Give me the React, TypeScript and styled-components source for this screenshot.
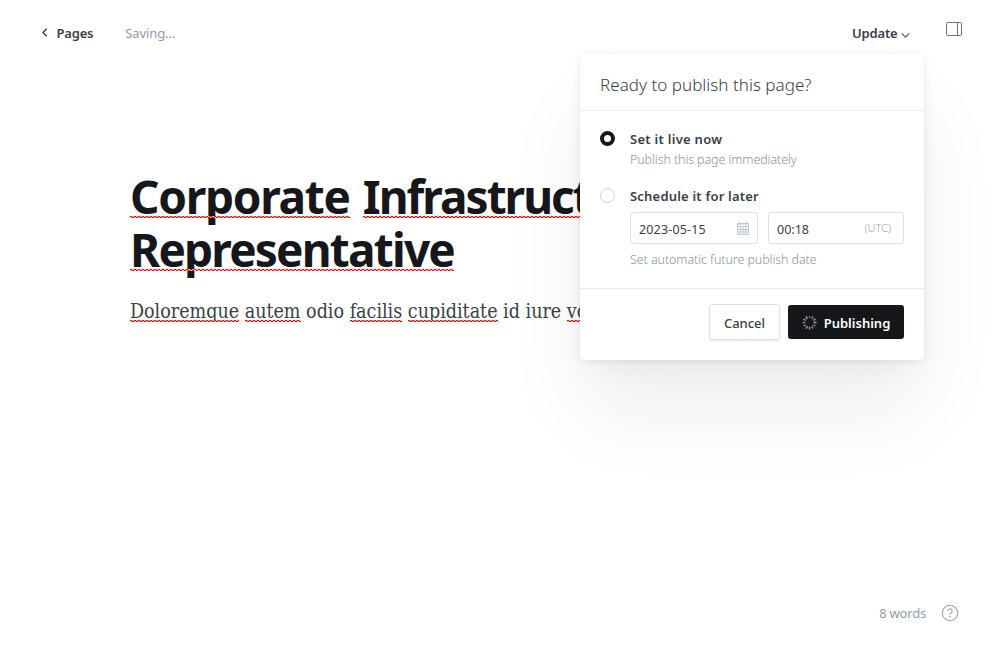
import React from 'react';
import styled, { createGlobalStyle } from 'styled-components';

const sans = `"Noto Sans", "Liberation Sans", sans-serif`;

const Global = createGlobalStyle`
  *, *::before, *::after { box-sizing: border-box; }
  body { margin: 0; background: #fff; font-family: ${sans}; color: #394047; overflow: hidden; }
  h1, h2, p { margin: 0; font-weight: 400; }
  button { font-family: inherit; }
  svg { display: block; flex: none; }
`;

const Page = styled.div`
  position: relative;
  display: flex;
  flex-direction: column;
  width: 1000px;
  height: 660px;
  overflow: hidden;
`;

const Label = styled.span<{ $size?: number; $weight?: number; $color?: string; $track?: number }>`
  font-size: ${p => p.$size ?? 13}px;
  font-weight: ${p => p.$weight ?? 400};
  color: ${p => p.$color ?? '#394047'};
  letter-spacing: ${p => p.$track ?? 0}px;
  line-height: 20px;
  white-space: nowrap;
`;

const TopBar = styled.header`
  display: flex;
  justify-content: space-between;
  height: 68px;
  padding: 20px 38px 0 41px;
`;

const BarGroup = styled.div`
  display: flex;
  align-items: flex-start;
`;

const BackLink = styled.a`
  display: flex;
  gap: 7.5px;
  margin-right: 32px;
  padding-top: 3px;
`;

const Status = styled.div`
  display: flex;
  padding-top: 3px;
`;

const UpdateButton = styled.button`
  display: flex;
  gap: 3.5px;
  margin: 3px 36px 0 0;
  padding: 0;
  border: 0;
  background: none;
`;

const Editor = styled.main`
  flex: 1;
  padding: 102px 0 0 130px;
`;

const Title = styled.h1`
  width: 740px;
  color: #15171a;
  font-size: 46px;
  font-weight: 700;
  line-height: 53px;
  letter-spacing: -1.8px;
  word-spacing: 3px;
  white-space: nowrap;
`;

const Body = styled.p`
  margin-top: 20px;
  color: #394047;
  font-family: "DejaVu Serif Condensed", "DejaVu Serif", serif;
  font-stretch: condensed;
  font-size: 19.5px;
  line-height: 32px;
  white-space: nowrap;
`;

const Misspelled = styled.span<{ $drop: number; $track?: number }>`
  position: relative;
  letter-spacing: ${p => (p.$track === undefined ? 'inherit' : `${p.$track}px`)};
  &::after {
    content: '';
    position: absolute;
    left: 0;
    right: 0;
    bottom: ${p => p.$drop}px;
    height: 2px;
    background:
      linear-gradient(90deg, #f00 50%, #ffb3b3 50%) 0 0 / 4px 1px repeat-x,
      linear-gradient(90deg, #ffb3b3 50%, #f00 50%) 0 1px / 4px 1px repeat-x;
  }
`;

const StatusBar = styled.footer`
  display: flex;
  justify-content: flex-end;
  align-items: center;
  gap: 15px;
  height: 36px;
  margin-bottom: 29px;
  padding-right: 41px;
`;

const Dialog = styled.section`
  position: absolute;
  top: 54px;
  left: 580px;
  width: 344px;
  height: 306px;
  background: #fff;
  border-radius: 5px;
  box-shadow:
    0 0 7px rgba(0, 0, 0, 0.08),
    0 2px 3px -1px rgba(0, 0, 0, 0.02),
    0 12px 24px -6px rgba(0, 0, 0, 0.05),
    0 54px 85px -4px rgba(0, 0, 0, 0.07);
`;

const DialogHeader = styled.div`
  display: flex;
  height: 57px;
  padding: 21px 20px 0;
  border-bottom: 1px solid #e9ebec;
`;

const Options = styled.div`
  display: flex;
  flex-direction: column;
  gap: 16px;
  height: 178px;
  padding: 18px 20px 0;
  border-bottom: 1px solid #e9ebec;
`;

const Option = styled.div`
  display: flex;
  gap: 15px;
`;

const OptionText = styled.div`
  display: flex;
  flex-direction: column;
  flex: 1;
`;

const Hint = styled(Label)`
  margin-top: 1px;
`;

const Radio = styled.span<{ $on?: boolean }>`
  width: 15px;
  height: 15px;
  margin-top: 2px;
  border: ${p => (p.$on ? '4px solid #15171a' : '1px solid #c8d1d9')};
  border-radius: 50%;
`;

const Fields = styled.div`
  display: flex;
  gap: 10px;
  margin: 6px 0 5px;
`;

const Field = styled.div<{ $width: number; $end: number }>`
  display: flex;
  align-items: center;
  justify-content: space-between;
  width: ${p => p.$width}px;
  height: 32px;
  padding: 0 ${p => p.$end}px 0 8px;
  border: 1px solid #dddfe2;
  border-radius: 3px;
`;

const FieldValue = styled(Label)`
  padding-top: 4px;
`;

const Actions = styled.div`
  display: flex;
  justify-content: flex-end;
  align-items: center;
  gap: 8px;
  height: 66px;
  padding-right: 20px;
`;

const Button = styled.button<{ $primary?: boolean }>`
  display: flex;
  align-items: center;
  justify-content: center;
  gap: 7px;
  width: ${p => (p.$primary ? 116 : 71)}px;
  height: ${p => (p.$primary ? 34 : 36)}px;
  padding: ${p => (p.$primary ? 2 : 1)}px 0 0;
  border: ${p => (p.$primary ? '0' : '1px solid #dfe1e3')};
  border-radius: 3px;
  background: ${p => (p.$primary ? '#15171a' : '#fff')};
  box-shadow: ${p => (p.$primary ? 'none' : '0 1px 2px rgba(0, 0, 0, 0.09)')};
`;

const ChevronLeft = () => (
  <svg width="8" height="20" viewBox="0 0 8 20" fill="none" stroke="#394047" strokeWidth="1.4">
    <path d="M5.7 5.7 1.9 9.5l3.8 3.8" />
  </svg>
);

const ChevronDown = () => (
  <svg width="9" height="20" viewBox="0 0 9 20" fill="none" stroke="#5d656c" strokeWidth="1.3">
    <path d="M.7 10.4 4.5 14.1 8.3 10.4" />
  </svg>
);

const SidebarIcon = () => (
  <svg width="16" height="20" viewBox="0 0 16 20" fill="none" stroke="#6a7178">
    <rect x=".5" y="2.5" width="15" height="13" rx="1.2" />
    <path d="M11.5 2.5v13" />
  </svg>
);

const HelpIcon = () => (
  <svg width="18" height="18" viewBox="0 0 18 18" fill="none" stroke="#98a5b3" strokeWidth="1.1">
    <circle cx="9" cy="9" r="7.7" />
    <path d="M6.8 7.1a2.2 2.2 0 1 1 3.3 1.9C9.3 9.5 9 9.8 9 10.7" />
    <circle cx="9" cy="12.7" r=".35" fill="#98a5b3" />
  </svg>
);

const CalendarIcon = () => (
  <svg width="12" height="14" viewBox="0 0 12 14" fill="none" stroke="#bcc5cd" strokeWidth=".9">
    <path d="M.5 2.5h11v11H.5zM.5 5.5h11M.5 8.5h11M.5 11h11M3.3 5.3v8.2M6 5.3v8.2M8.7 5.3v8.2M2.5.3v3.4M9.5.3v3.4" />
    <path d="M.5 3.5h11" strokeWidth="2" opacity=".45" />
  </svg>
);

const Spinner = () => (
  <svg width="15" height="15" viewBox="-7.5 -6.5 15 15" stroke="#a5a8ab" strokeWidth="1.6">
    {Array.from({ length: 12 }, (_, i) => (
      <path key={i} d="M0-4.2V-7" transform={`rotate(${i * 30})`} opacity={0.6 + (i % 4) * 0.12} />
    ))}
  </svg>
);

export default function App() {
  return (
    <Page>
      <Global />
      <TopBar>
        <BarGroup>
          <BackLink>
            <ChevronLeft />
            <Label $weight={600} $track={-0.2}>Pages</Label>
          </BackLink>
          <Status><Label $color="#8e9cab" $track={-0.1}>Saving...</Label></Status>
        </BarGroup>
        <BarGroup>
          <UpdateButton>
            <Label $weight={600} $track={-0.15}>Update</Label>
            <ChevronDown />
          </UpdateButton>
          <SidebarIcon />
        </BarGroup>
      </TopBar>
      <Editor>
        <Title>
          <Misspelled $drop={9} $track={-1.3}>Corporate</Misspelled>{' '}
          <Misspelled $drop={9} $track={-2}>Infrastructure</Misspelled>
          <br />
          <Misspelled $drop={9}>Representative</Misspelled>
        </Title>
        <Body>
          <Misspelled $drop={1}>Doloremque</Misspelled> <Misspelled $drop={1}>autem</Misspelled> odio{' '}
          <Misspelled $drop={1}>facilis</Misspelled> <Misspelled $drop={1}>cupiditate</Misspelled> id iure{' '}
          <Misspelled $drop={1}>voluptas</Misspelled>
        </Body>
      </Editor>
      <StatusBar>
        <Label $color="#8e9cab" $track={-0.2}>8 words</Label>
        <HelpIcon />
      </StatusBar>
      <Dialog>
        <DialogHeader>
          <Label $size={17} $weight={340} $track={0.03}>Ready to publish this page?</Label>
        </DialogHeader>
        <Options>
          <Option>
            <Radio $on />
            <OptionText>
              <Label $weight={600} $track={0.28}>Set it live now</Label>
              <Hint $size={12.5} $weight={300} $color="#8594a5" $track={-0.1}>Publish this page immediately</Hint>
            </OptionText>
          </Option>
          <Option>
            <Radio />
            <OptionText>
              <Label $weight={600} $track={0.2}>Schedule it for later</Label>
              <Fields>
                <Field $width={128} $end={8}>
                  <FieldValue $size={12.5} $track={0.15}>2023-05-15</FieldValue>
                  <CalendarIcon />
                </Field>
                <Field $width={136} $end={12}>
                  <FieldValue $size={12.5}>00:18</FieldValue>
                  <Label $size={11} $weight={300} $color="#98a5b3">(UTC)</Label>
                </Field>
              </Fields>
              <Hint $size={12.5} $weight={300} $color="#8594a5" $track={-0.08}>Set automatic future publish date</Hint>
            </OptionText>
          </Option>
        </Options>
        <Actions>
          <Button><Label $weight={500}>Cancel</Label></Button>
          <Button $primary>
            <Spinner />
            <Label $weight={600} $color="#fff">Publishing</Label>
          </Button>
        </Actions>
      </Dialog>
    </Page>
  );
}
